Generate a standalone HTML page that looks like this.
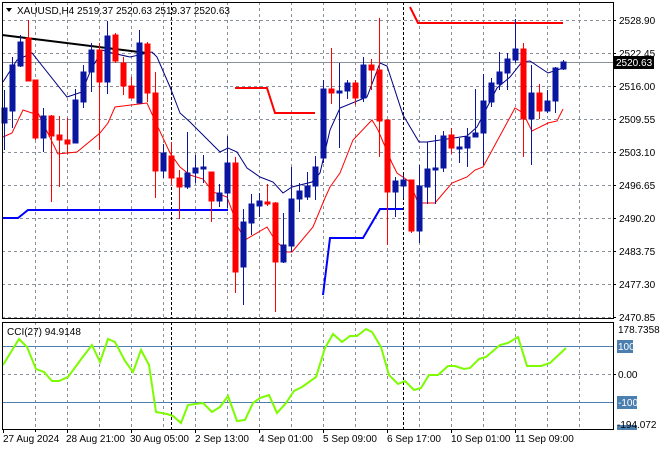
<!DOCTYPE html>
<html><head><style>
html,body{margin:0;padding:0;background:#fff;width:660px;height:450px;overflow:hidden}
svg{display:block;font-family:"Liberation Sans",sans-serif;font-size:10px}
</style></head><body>
<svg width="660" height="450" viewBox="0 0 660 450" xmlns="http://www.w3.org/2000/svg">
<rect width="660" height="450" fill="#fff"/>
<g stroke="#8a9099" stroke-dasharray="3,3" stroke-width="1">
<path d="M35.5 2V318M67.5 2V318M99.5 2V318M131.5 2V318M163.5 2V318M195.5 2V318M227.5 2V318M259.5 2V318M291.5 2V318M323.5 2V318M355.5 2V318M387.5 2V318M419.5 2V318M451.5 2V318M483.5 2V318M515.5 2V318M547.5 2V318M579.5 2V318"/>
<path d="M2 20.5H613M2 53.5H613M2 86.5H613M2 119.5H613M2 152.5H613M2 185.5H613M2 218.5H613M2 251.5H613M2 284.5H613M2 317.5H613"/>
<path d="M35.5 322V429M67.5 322V429M99.5 322V429M131.5 322V429M163.5 322V429M195.5 322V429M227.5 322V429M259.5 322V429M291.5 322V429M323.5 322V429M355.5 322V429M387.5 322V429M419.5 322V429M451.5 322V429M483.5 322V429M515.5 322V429M547.5 322V429M579.5 322V429"/>
<path d="M2 374.5H613"/>
</g>
<g stroke="#000" stroke-dasharray="3,2" stroke-width="1">
<path d="M171.5 2V318M403.5 2V318M171.5 322V429M403.5 322V429"/>
</g>
<path d="M2 62.5H613" stroke="#8a9099" stroke-width="1"/>
<polyline points="2,218 18,218 28,210 228,210" fill="none" stroke="#0000ff" stroke-width="2"/>
<polyline points="323,295 330,238 363,238 380,209 403,209" fill="none" stroke="#0000ff" stroke-width="2"/>
<polyline points="235,88 267,88 275,113 315,113" fill="none" stroke="#ff0000" stroke-width="2"/>
<polyline points="410,7 418,23 563,23" fill="none" stroke="#ff0000" stroke-width="2"/>
<polyline points="2,35 147,53" fill="none" stroke="#000" stroke-width="2"/>
<polyline points="3,82 17,60 32,53 67,97 82,92 90,72 102,50 112,53 130,57 152,52 157,57 170,87 180,113 190,122 220,152 228,148 237,152 247,168 260,177 273,182 283,193 292,187 312,182 320,173 330,130 340,108 367,97 380,63 387,66 403,115 419,142 427,142 467,136 477,127 497,88 510,77 522,62 530,61 548,73 557,70 563,68" fill="none" stroke="#000080" stroke-width="1"/>
<polyline points="3,137 12,133 23,110 32,113 38,113 58,154 67,153 77,152 100,133 108,123 115,107 147,103 157,125 170,153 180,167 190,175 203,179 213,192 227,197 238,227 245,240 267,227 275,240 287,252 292,252 313,227 325,198 330,187 340,173 353,140 372,120 378,130 392,163 397,173 410,182 418,203 435,203 452,183 467,177 475,170 483,167 515,108 523,113 532,131 548,123 557,121 563,109" fill="none" stroke="#ff0000" stroke-width="1"/>
<g stroke-width="1">
<g stroke="#0a16a0" fill="#0a16a0">
<path d="M4.5 90V150M12.5 57V128M20.5 35V67M43.5 108V152M75.5 89V143M83.5 65V108M91.5 43V92M107.5 21V94M139.5 30V103M163.5 144V178M187.5 132V189M195.5 155V183M203.5 155V183M219.5 184V207M227.5 136V208M243.5 209V305M251.5 194V235M259.5 193V217M283.5 213V263M291.5 167V252M299.5 183V212M307.5 172V200M315.5 156V200M323.5 80V163M339.5 63V148M347.5 80V99M363.5 57V102M395.5 177V217M403.5 175V198M419.5 165V243M427.5 142V204M435.5 135V204M443.5 131V172M459.5 138V163M467.5 128V167M475.5 89V137M483.5 74V165M491.5 78V107M499.5 52V90M507.5 53V90M515.5 19V63M531.5 65V165M547.5 90V113M555.5 67V113M563.5 60V70"/>
<rect x="2" y="108" width="5" height="15"/><rect x="10" y="65" width="5" height="46"/><rect x="18" y="42" width="5" height="24"/>
<rect x="41" y="116" width="5" height="22"/><rect x="73" y="100" width="5" height="43"/><rect x="81" y="72" width="5" height="30"/>
<rect x="89" y="50" width="5" height="22"/><rect x="105" y="36" width="5" height="46"/><rect x="137" y="43" width="5" height="60"/>
<rect x="161" y="153" width="5" height="18"/><rect x="185" y="173" width="5" height="14"/><rect x="193" y="168" width="5" height="5"/>
<rect x="201" y="167" width="5" height="2"/><rect x="217" y="193" width="5" height="8"/><rect x="225" y="163" width="5" height="30"/>
<rect x="241" y="222" width="5" height="45"/><rect x="249" y="204" width="5" height="19"/><rect x="257" y="201" width="5" height="5"/>
<rect x="281" y="245" width="5" height="17"/><rect x="289" y="199" width="5" height="47"/><rect x="297" y="191" width="5" height="8"/>
<rect x="305" y="186" width="5" height="11"/><rect x="313" y="167" width="5" height="19"/><rect x="321" y="89" width="5" height="69"/>
<rect x="337" y="91" width="5" height="2"/><rect x="345" y="83" width="5" height="8"/><rect x="361" y="65" width="5" height="33"/>
<rect x="393" y="181" width="5" height="11"/><rect x="401" y="180" width="5" height="6"/><rect x="417" y="186" width="5" height="45"/>
<rect x="425" y="169" width="5" height="18"/><rect x="433" y="168" width="5" height="2"/><rect x="441" y="136" width="5" height="32"/>
<rect x="457" y="147" width="5" height="2"/><rect x="465" y="137" width="5" height="11"/><rect x="473" y="133" width="5" height="4"/>
<rect x="481" y="101" width="5" height="32"/><rect x="489" y="83" width="5" height="19"/><rect x="497" y="72" width="5" height="12"/>
<rect x="505" y="59" width="5" height="14"/><rect x="513" y="49" width="5" height="11"/><rect x="529" y="93" width="5" height="26"/>
<rect x="545" y="101" width="5" height="10"/><rect x="553" y="68" width="5" height="33"/><rect x="561" y="62" width="5" height="7"/>
</g>
<g stroke="#ff0000" fill="#ff0000">
<path d="M28.5 20V81M35.5 80V140M51.5 115V202M59.5 116V187M67.5 118V154M99.5 43V150M115.5 33V63M123.5 57V95M131.5 77V98M147.5 42V102M155.5 72V198M171.5 142V185M179.5 170V219M211.5 172V222M235.5 157V293M267.5 184V206M275.5 202V312M331.5 48V104M355.5 80V105M371.5 59V90M379.5 18V157M387.5 120V245M411.5 180V233M451.5 128V154M523.5 43V157M539.5 84V119"/>
<rect x="26" y="38" width="5" height="43"/><rect x="33" y="80" width="5" height="58"/><rect x="49" y="116" width="5" height="20"/>
<rect x="57" y="135" width="5" height="5"/><rect x="65" y="140" width="5" height="4"/><rect x="97" y="50" width="5" height="32"/>
<rect x="113" y="35" width="5" height="26"/><rect x="121" y="63" width="5" height="23"/><rect x="129" y="86" width="5" height="12"/>
<rect x="145" y="44" width="5" height="49"/><rect x="153" y="93" width="5" height="78"/><rect x="169" y="156" width="5" height="22"/>
<rect x="177" y="178" width="5" height="9"/><rect x="209" y="172" width="5" height="29"/><rect x="233" y="163" width="5" height="109"/>
<rect x="265" y="202" width="5" height="2"/><rect x="273" y="203" width="5" height="59"/><rect x="329" y="89" width="5" height="4"/>
<rect x="353" y="83" width="5" height="15"/><rect x="369" y="65" width="5" height="5"/><rect x="377" y="70" width="5" height="51"/>
<rect x="385" y="120" width="5" height="72"/><rect x="409" y="180" width="5" height="51"/><rect x="449" y="135" width="5" height="13"/>
<rect x="521" y="49" width="5" height="70"/><rect x="537" y="93" width="5" height="18"/>
</g>
</g>
<path d="M2 346.5H613M2 402.5H613" stroke="#4a7fb0" stroke-width="1"/>
<polyline points="3,365 19,339 27,347 36,369 44,372 52,381 59,381 68,377 82,358 92,345 100,362 108,339 115,342 125,361 133,372 141,350 149,365 156,412 167,414 173,416 181,423 188,405 203,403 212,412 220,407 228,396 237,421 245,420 253,403 260,398 269,395 277,413 286,403 294,391 302,387 316,377 325,348 333,334 342,342 350,336 357,336 366,329 372,332 381,347 389,375 398,384 405,381 414,390 421,388 429,375 438,375 448,366 455,366 464,369 470,368 479,359 486,357 500,345 508,343 518,337 527,366 541,366 550,363 566,348" fill="none" stroke="#7cfc00" stroke-width="2"/>
<rect x="2.5" y="2.5" width="611" height="316" fill="none" stroke="#000"/>
<rect x="2.5" y="322.5" width="611" height="107" fill="none" stroke="#000"/>
<path d="M6 8L12 8L9 12Z" fill="#000"/>
<text x="17" y="14" fill="#000">XAUUSD,H4  2519.37 2520.63 2519.37 2520.63</text>
<text x="7" y="335" fill="#000">CCI(27) 94.9148</text>
<g fill="#000">
<text x="619" y="24">2528.90</text><text x="619" y="57">2522.45</text><text x="619" y="90">2516.00</text>
<text x="619" y="123">2509.55</text><text x="619" y="156">2503.10</text><text x="619" y="189">2496.65</text>
<text x="619" y="222">2490.20</text><text x="619" y="255">2483.75</text><text x="619" y="288">2477.30</text>
<text x="619" y="321">2470.85</text>
</g>
<g stroke="#000"><path d="M613 20.5h3M613 53.5h3M613 86.5h3M613 119.5h3M613 152.5h3M613 185.5h3M613 218.5h3M613 251.5h3M613 284.5h3M613 317.5h3M613 374.5h3"/></g>
<rect x="614" y="56" width="40" height="13" fill="#000"/>
<text x="616" y="66" fill="#fff">2520.63</text>
<text x="618" y="333" fill="#000">178.7358</text>
<rect x="617" y="340" width="16" height="13" fill="#4a7fb0"/><text x="618" y="350" fill="#fff">100</text>
<text x="618" y="378" fill="#000">0.00</text>
<rect x="617" y="396" width="20" height="13" fill="#4a7fb0"/><text x="618" y="406" fill="#fff">-100</text>
<rect x="617" y="425" width="20" height="5" fill="#4a7fb0"/>
<text x="617" y="428" fill="#000">-194.072</text>
<g stroke="#000"><path d="M3.5 429v4M35.5 429v3M67.5 429v4M131.5 429v4M195.5 429v4M259.5 429v4M323.5 429v4M387.5 429v4M451.5 429v4M515.5 429v4"/></g>
<g fill="#000">
<text x="3" y="442">27 Aug 2024</text><text x="66" y="442">28 Aug 21:00</text><text x="130" y="442">30 Aug 05:00</text>
<text x="195" y="442">2 Sep 13:00</text><text x="259" y="442">4 Sep 01:00</text><text x="323" y="442">5 Sep 09:00</text>
<text x="387" y="442">6 Sep 17:00</text><text x="451" y="442">10 Sep 01:00</text><text x="515" y="442">11 Sep 09:00</text>
</g>
</svg>
</body></html>
